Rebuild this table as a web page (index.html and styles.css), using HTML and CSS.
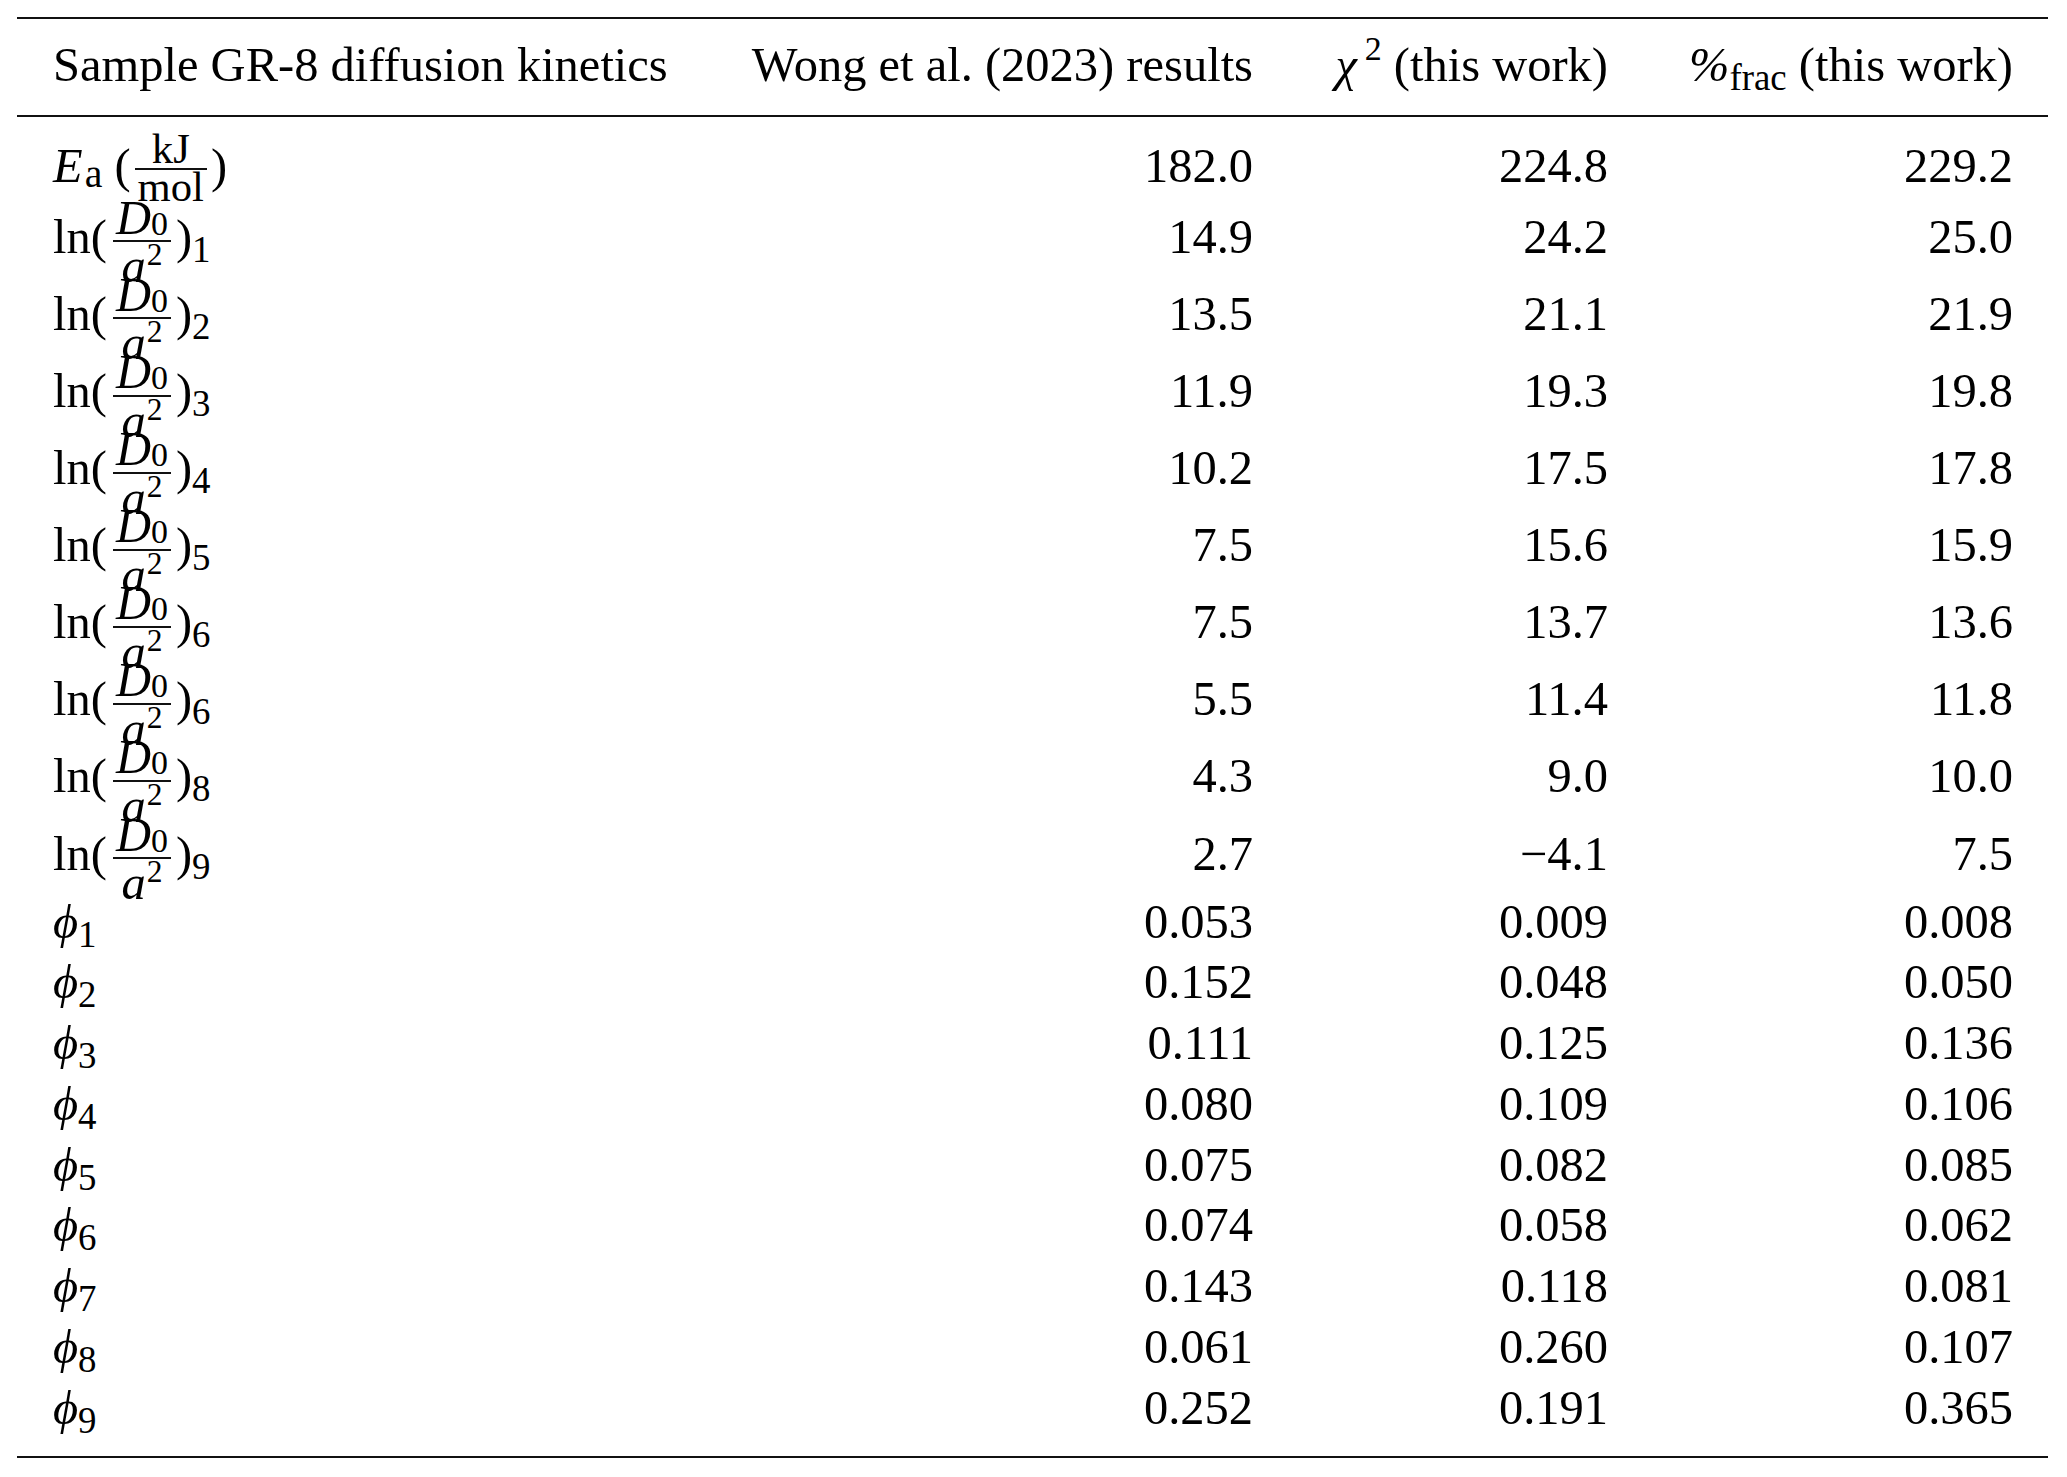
FILE: index.html
```html
<!DOCTYPE html>
<html>
<head>
<meta charset="utf-8">
<title>Sample GR-8 diffusion kinetics</title>
<link rel="stylesheet" href="styles.css">
</head>
<body>
<div class="table">
  <div class="row head">
    <div class="lab">Sample GR-8 diffusion kinetics</div>
    <div class="val">Wong et al. (2023) results</div>
    <div class="val"><span class="m">χ</span><span class="sp chi2">2</span> (this work)</div>
    <div class="val"><span class="m">%</span><span class="sb">frac</span> (this work)</div>
  </div>

  <div class="row ea">
    <div class="lab"><span class="m">E</span><span class="sb sba">a</span> (<span class="frac unit"><span class="fn">kJ</span><span class="fd">mol</span></span>)</div>
    <div class="val">182.0</div><div class="val">224.8</div><div class="val">229.2</div>
  </div>

  <div class="row ln">
    <div class="lab">ln(<span class="frac"><span class="fn"><span class="m">D</span><span class="s0">0</span></span><span class="fd"><span class="m">a</span><span class="sp2">2</span></span></span>)<span class="sb">1</span></div>
    <div class="val">14.9</div><div class="val">24.2</div><div class="val">25.0</div>
  </div>
  <div class="row ln">
    <div class="lab">ln(<span class="frac"><span class="fn"><span class="m">D</span><span class="s0">0</span></span><span class="fd"><span class="m">a</span><span class="sp2">2</span></span></span>)<span class="sb">2</span></div>
    <div class="val">13.5</div><div class="val">21.1</div><div class="val">21.9</div>
  </div>
  <div class="row ln">
    <div class="lab">ln(<span class="frac"><span class="fn"><span class="m">D</span><span class="s0">0</span></span><span class="fd"><span class="m">a</span><span class="sp2">2</span></span></span>)<span class="sb">3</span></div>
    <div class="val">11.9</div><div class="val">19.3</div><div class="val">19.8</div>
  </div>
  <div class="row ln">
    <div class="lab">ln(<span class="frac"><span class="fn"><span class="m">D</span><span class="s0">0</span></span><span class="fd"><span class="m">a</span><span class="sp2">2</span></span></span>)<span class="sb">4</span></div>
    <div class="val">10.2</div><div class="val">17.5</div><div class="val">17.8</div>
  </div>
  <div class="row ln">
    <div class="lab">ln(<span class="frac"><span class="fn"><span class="m">D</span><span class="s0">0</span></span><span class="fd"><span class="m">a</span><span class="sp2">2</span></span></span>)<span class="sb">5</span></div>
    <div class="val">7.5</div><div class="val">15.6</div><div class="val">15.9</div>
  </div>
  <div class="row ln">
    <div class="lab">ln(<span class="frac"><span class="fn"><span class="m">D</span><span class="s0">0</span></span><span class="fd"><span class="m">a</span><span class="sp2">2</span></span></span>)<span class="sb">6</span></div>
    <div class="val">7.5</div><div class="val">13.7</div><div class="val">13.6</div>
  </div>
  <div class="row ln">
    <div class="lab">ln(<span class="frac"><span class="fn"><span class="m">D</span><span class="s0">0</span></span><span class="fd"><span class="m">a</span><span class="sp2">2</span></span></span>)<span class="sb">6</span></div>
    <div class="val">5.5</div><div class="val">11.4</div><div class="val">11.8</div>
  </div>
  <div class="row ln">
    <div class="lab">ln(<span class="frac"><span class="fn"><span class="m">D</span><span class="s0">0</span></span><span class="fd"><span class="m">a</span><span class="sp2">2</span></span></span>)<span class="sb">8</span></div>
    <div class="val">4.3</div><div class="val">9.0</div><div class="val">10.0</div>
  </div>
  <div class="row ln">
    <div class="lab">ln(<span class="frac"><span class="fn"><span class="m">D</span><span class="s0">0</span></span><span class="fd"><span class="m">a</span><span class="sp2">2</span></span></span>)<span class="sb">9</span></div>
    <div class="val">2.7</div><div class="val">−4.1</div><div class="val">7.5</div>
  </div>

  <div class="row phi">
    <div class="lab"><span class="m">ϕ</span><span class="sb">1</span></div>
    <div class="val">0.053</div><div class="val">0.009</div><div class="val">0.008</div>
  </div>
  <div class="row phi">
    <div class="lab"><span class="m">ϕ</span><span class="sb">2</span></div>
    <div class="val">0.152</div><div class="val">0.048</div><div class="val">0.050</div>
  </div>
  <div class="row phi">
    <div class="lab"><span class="m">ϕ</span><span class="sb">3</span></div>
    <div class="val">0.111</div><div class="val">0.125</div><div class="val">0.136</div>
  </div>
  <div class="row phi">
    <div class="lab"><span class="m">ϕ</span><span class="sb">4</span></div>
    <div class="val">0.080</div><div class="val">0.109</div><div class="val">0.106</div>
  </div>
  <div class="row phi">
    <div class="lab"><span class="m">ϕ</span><span class="sb">5</span></div>
    <div class="val">0.075</div><div class="val">0.082</div><div class="val">0.085</div>
  </div>
  <div class="row phi">
    <div class="lab"><span class="m">ϕ</span><span class="sb">6</span></div>
    <div class="val">0.074</div><div class="val">0.058</div><div class="val">0.062</div>
  </div>
  <div class="row phi">
    <div class="lab"><span class="m">ϕ</span><span class="sb">7</span></div>
    <div class="val">0.143</div><div class="val">0.118</div><div class="val">0.081</div>
  </div>
  <div class="row phi">
    <div class="lab"><span class="m">ϕ</span><span class="sb">8</span></div>
    <div class="val">0.061</div><div class="val">0.260</div><div class="val">0.107</div>
  </div>
  <div class="row phi">
    <div class="lab"><span class="m">ϕ</span><span class="sb">9</span></div>
    <div class="val">0.252</div><div class="val">0.191</div><div class="val">0.365</div>
  </div>
</div>
</body>
</html>
```

FILE: styles.css
```css
html, body {
  margin: 0;
  padding: 0;
  background: #ffffff;
}

body {
  font-family: "Liberation Serif", "Times New Roman", "DejaVu Serif", serif;
  color: #000000;
}

.table {
  margin: 17px 0 0 17px;
  width: 2031px;
  border-top: 2px solid #111;
  border-bottom: 2px solid #111;
  padding-bottom: 18px;
  font-size: 48.5px;
}

.row {
  display: grid;
  grid-template-columns: 623px 505px 283px 333px;
  column-gap: 72px;
  padding: 0 35px 0 36px;
  line-height: 60.75px;
  white-space: nowrap;
}

.lab {
  text-align: left;
}

.val {
  text-align: right;
}

.head {
  padding-top: 16px;
  padding-bottom: 19px;
  border-bottom: 2px solid #111;
}

.ea {
  padding-top: 16px;
  line-height: 65px;
}

.ln {
  line-height: 77.1px;
}

.phi {
  line-height: 60.75px;
}

.m {
  font-style: italic;
}

.sb {
  font-size: 0.76em;
  line-height: 0;
  vertical-align: -9px;
}

.sba {
  font-size: 0.82em;
  vertical-align: -5px;
  margin-left: 2px;
}

.sp {
  font-size: 0.7em;
  line-height: 0;
  vertical-align: 21px;
}

.chi2 {
  margin-left: 8px;
}

.frac {
  display: inline-flex;
  flex-direction: column;
  align-items: stretch;
  text-align: center;
  line-height: 1;
  vertical-align: 19px;
  margin: -45px 5px -45px 6px;
}

.fn {
  height: 46.6px;
  padding: 0 3px;
  border-bottom: 2px solid #111;
}

.fd {
  padding: 0 3px;
}

.unit {
  font-size: 0.88em;
  vertical-align: 19px;
  margin: -45px 4px -45px 4px;
}

.unit .fn {
  height: 40.5px;
}

.unit .fd {
  margin-top: -4px;
}

.s0 {
  font-size: 0.7em;
  line-height: 0;
  vertical-align: -1px;
}

.sp2 {
  font-size: 0.65em;
  line-height: 0;
  vertical-align: 17px;
  margin-left: 1px;
}
```
